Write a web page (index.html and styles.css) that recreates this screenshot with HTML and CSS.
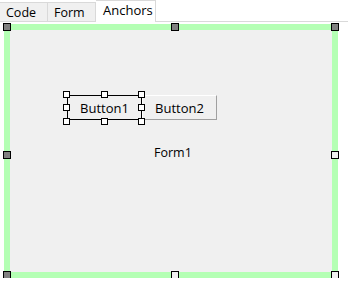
FILE: index.html
```html
<!DOCTYPE html>
<html lang="en">
<head>
<meta charset="UTF-8">
<title>Anchors</title>
<link rel="stylesheet" href="styles.css">
</head>
<body>

<div class="tabs">
    <div class="tab">Code</div>
    <div class="tab">Form</div>
    <div class="tab active">Anchors</div>
    <div class="tab-rest"></div>
</div>

<div class="frame">
    <div class="form">
        <div class="button-row">
            <div class="selected">
                <button class="btn">Button1</button>
                <span class="sel-handle" style="left: -4px; top: -4px;"></span>
                <span class="sel-handle" style="left: 34px; top: -4px;"></span>
                <span class="sel-handle" style="left: 71px; top: -4px;"></span>
                <span class="sel-handle" style="left: -4px; top: 9px;"></span>
                <span class="sel-handle" style="left: 71px; top: 9px;"></span>
                <span class="sel-handle" style="left: -4px; top: 23px;"></span>
                <span class="sel-handle" style="left: 34px; top: 23px;"></span>
                <span class="sel-handle" style="left: 71px; top: 23px;"></span>
            </div>
            <button class="btn">Button2</button>
        </div>
        <div class="form-title">Form1</div>
    </div>
    <span class="handle locked" style="left: -1px; top: -1px;"></span>
    <span class="handle locked" style="left: 167px; top: -1px;"></span>
    <span class="handle locked" style="left: 327px; top: -1px;"></span>
    <span class="handle locked" style="left: -1px; top: 127px;"></span>
    <span class="handle" style="left: 327px; top: 127px;"></span>
    <span class="handle locked" style="left: -1px; top: 247px;"></span>
    <span class="handle" style="left: 167px; top: 247px;"></span>
    <span class="handle" style="left: 327px; top: 247px;"></span>
</div>

</body>
</html>
```

FILE: styles.css
```css
body {
    margin: 0;
    background-color: #ffffff;
    font-family: "Open Sans", Arial, sans-serif;
    font-size: 12.5px;
    color: #000000;
}
.tabs {
    display: flex;
    height: 22px;
    align-items: flex-end;
}
.tab {
    box-sizing: border-box;
    height: 20px;
    padding: 0 6px;
    width: 48px;
    line-height: 19px;
    background-color: #f0f0f0;
    border-top: 1px solid #d9d9d9;
    border-right: 1px solid #d9d9d9;
    border-bottom: 1px solid #d9d9d9;
}
.tab.active {
    width: 60px;
    height: 22px;
    line-height: 18px;
    padding: 0 7px;
    background-color: #ffffff;
    border-bottom: none;
    font-size: 13px;
}
.tab-rest {
    flex: 1;
    height: 22px;
    box-sizing: border-box;
    border-bottom: 1px solid #d9d9d9;
}
.frame {
    position: relative;
    box-sizing: border-box;
    width: 334px;
    height: 254px;
    margin: 2px 0 0 4px;
    padding: 6px;
    background-color: #b4ffb4;
}
.form {
    height: 100%;
    background-color: #f0f0f0;
    padding-top: 65px;
    box-sizing: border-box;
}
.button-row {
    display: flex;
    margin-left: 57px;
}
.btn {
    box-sizing: border-box;
    width: 75px;
    height: 25px;
    padding: 0;
    font-family: "Open Sans", Arial, sans-serif;
    font-size: 13px;
    color: #000000;
    background-color: #f0f0f0;
    border: 1px solid;
    border-color: #ffffff #a0a0a0 #a0a0a0 #ffffff;
}
.selected {
    position: relative;
    width: 75px;
    height: 25px;
}
.selected .btn {
    border-color: #000000;
}
.sel-handle {
    position: absolute;
    box-sizing: border-box;
    width: 7px;
    height: 7px;
    background-color: #ffffff;
    border: 1px solid #000000;
}
.form-title {
    margin: 24px 0 0 144px;
    font-size: 12.5px;
}
.handle {
    position: absolute;
    box-sizing: border-box;
    width: 8px;
    height: 8px;
    background-color: #f0f0f0;
    border: 1px solid #000000;
}
.handle.locked {
    background-color: #808080;
}
```
